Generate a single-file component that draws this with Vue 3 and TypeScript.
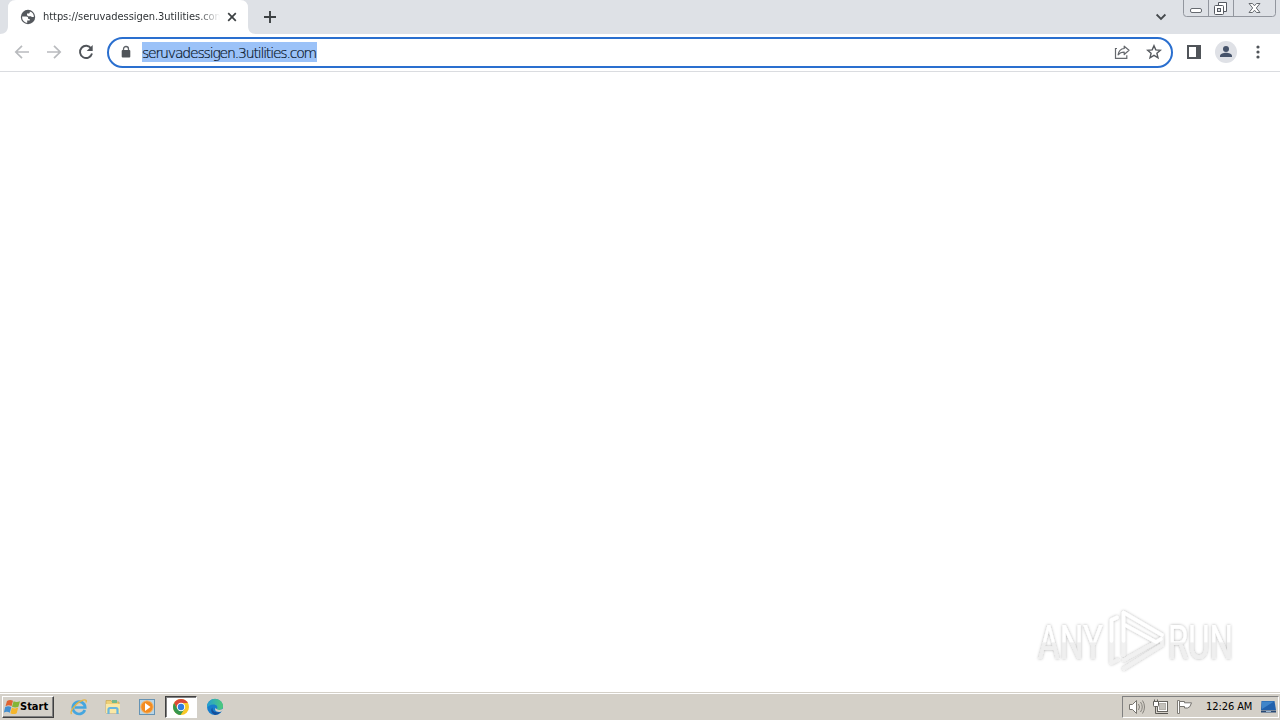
<script setup lang="ts">
import { ref } from 'vue'

const tabTitle = ref('https://seruvadessigen.3utilities.com')
const address = ref('seruvadessigen.3utilities.com')
const clock = ref('12:26 AM')
</script>

<template>
  <div class="desktop">
    <header class="strip">
      <svg class="tab-shape" width="264" height="34" viewBox="0 0 264 34"><path d="M0 34C5 34 8 31 8 26V8Q8 0 16 0H240Q248 0 248 8V26C248 31 251 34 256 34Z" fill="#fff" /></svg>
      <div class="tab">
        <svg width="16" height="16" viewBox="0 0 16 16"><circle cx="8" cy="8" r="7.2" fill="#54585d" /><path d="M2.100 7.400H6.500Q8.300 7.600 8.200 9.300V10h1.500v1.500H7.200v2.400A6 6 0 0 1 2.100 7.400Z" fill="#fff" /><path d="M9.800 2.400v.8c0 .8-.6 1.400-1.400 1.400H7V6L8 7.300h2.800c.5 0 .8.4.8.8h2.300A6 6 0 0 0 9.800 2.400Z" fill="#fff" /></svg>
        <span class="title">{{ tabTitle }}</span>
        <svg class="close" width="10" height="10" viewBox="0 0 10 10"><path d="m1.200 1.200 7.600 7.600m0-7.600L1.200 8.800" stroke="#3c4043" stroke-width="1.700" /></svg>
      </div>
      <svg class="plus" width="14" height="14" viewBox="0 0 14 14"><path d="M7 1v12M1 7h12" stroke="#3c4043" stroke-width="1.900" /></svg>
      <svg class="chevron" width="12" height="8" viewBox="0 0 12 8"><path d="m1.600 1.500 4.400 4.400 4.400-4.400" fill="none" stroke="#45494d" stroke-width="1.800" /></svg>
      <svg class="controls" width="94" height="18" viewBox="0 0 94 18">
        <path d="M.5 0v13.500q0 3 3 3h86q3 0 3-3V0M25.500 0v16M50.500 0v16" fill="none" stroke="#92969e" />
        <rect x="7.500" y="8.500" width="11" height="4" rx="1.500" fill="#fff" stroke="#666a70" />
        <path d="M35.500 5V2.500H43.500V11.500H41" fill="#fff" stroke="#555960" />
        <rect x="31.500" y="5.500" width="9" height="9" rx="1" fill="#fff" stroke="#555960" />
        <rect x="34.500" y="8.500" width="3" height="3" fill="#dee1e6" stroke="#555960" />
        <path d="M66 3.500h3.500l2 2.300 2-2.300H77l-3.700 4.500 3.700 4.500h-3.500l-2-2.300-2 2.300H66L69.700 8Z" fill="#fff" stroke="#676b70" />
      </svg>
    </header>

    <nav class="toolbar">
      <svg class="nav" width="16" height="16" viewBox="0 0 16 16"><path d="M15 8H2m6-6.200L1.800 8 8 14.200" fill="none" stroke="#b9bbbe" stroke-width="1.700" /></svg>
      <svg class="nav" width="16" height="16" viewBox="0 0 16 16"><path d="M1 8h13M8 1.800 14.200 8 8 14.200" fill="none" stroke="#b9bbbe" stroke-width="1.700" /></svg>
      <svg class="nav" width="16" height="16" viewBox="0 0 16 16"><path d="M13.200 4.500A6.100 6.100 0 1 0 14 9.500" fill="none" stroke="#505459" stroke-width="1.900" /><path d="M14.700 1v6H8.700Z" fill="#505459" /></svg>
      <div class="omnibox">
        <svg class="lock" width="10" height="14" viewBox="0 0 10 14"><path d="M2.500 6V4a2.500 2.500 0 0 1 5 0v2" fill="none" stroke="#5f6368" stroke-width="1.300" /><rect x=".7" y="5" width="8.600" height="7.500" rx="1" fill="#505459" /></svg>
        <span class="url"><span>{{ address }}</span></span>
        <svg class="share" width="16" height="16" viewBox="0 0 16 16"><path d="M3 4.500H1.500v9.800h11.300v-3" fill="none" stroke="#66696e" stroke-width="1.200" /><path d="M10.200 2.200 15 6.300l-4.800 4.200V8.100c-2.700 0-4.500.7-6.100 2.700.5-3.600 2.600-6 6.100-6.300Z" fill="none" stroke="#66696e" stroke-width="1.200" stroke-linejoin="round" /></svg>
        <svg class="star" width="16" height="16" viewBox="0 0 16 16"><path d="m8 1.700 1.800 4.200 4.600.4-3.500 3 1.100 4.500L8 11.400l-4 2.400 1.100-4.500-3.500-3 4.600-.4Z" fill="none" stroke="#55595e" stroke-width="1.400" /></svg>
      </div>
      <svg class="panel" width="14" height="14" viewBox="0 0 14 14"><rect x="1" y="1" width="12" height="12" fill="none" stroke="#505459" stroke-width="2" /><path d="M9 1h5v12H9Z" fill="#505459" /></svg>
      <svg class="avatar" width="22" height="22" viewBox="0 0 22 22"><circle cx="11" cy="11" r="11" fill="#dfe1e6" /><circle cx="11" cy="8" r="3" fill="#46536a" /><path d="M5 16v-1c0-2.200 3.500-3.300 6-3.300s6 1.100 6 3.300v1Z" fill="#46536a" /></svg>
      <svg class="menu" width="4" height="16" viewBox="0 0 4 16"><g fill="#505459"><circle cx="2" cy="3" r="1.600" /><circle cx="2" cy="8" r="1.600" /><circle cx="2" cy="13" r="1.600" /></g></svg>
    </nav>

    <main class="page">
      <svg class="watermark" width="210" height="76" viewBox="0 0 210 76">
        <defs>
          <linearGradient id="fade" x1="0" y1="0" x2="0" y2="1"><stop offset="0.49" stop-color="#fff" /><stop offset="0.52" stop-color="#efefef" /></linearGradient>
          <filter id="shade" x="-10%" y="-10%" width="120%" height="120%"><feDropShadow dx="0" dy="0" stdDeviation="1.700" flood-color="#000" flood-opacity=".32" /></filter>
        </defs>
        <g filter="url(#shade)">
          <g class="letters" fill="url(#fade)">
            <text x="8" y="58.500" textLength="65" lengthAdjust="spacingAndGlyphs">ANY</text>
            <text x="138" y="58.500" textLength="65" lengthAdjust="spacingAndGlyphs">RUN</text>
          </g>
          <g fill="none" stroke-width="3.600" stroke-linejoin="round" stroke-linecap="round">
            <path d="M81.500 42v21l6-3M93.500 42v13" stroke="#f1f1f1" />
            <path d="m94 60 32-18M94 68.500 132 45v-7" stroke="#f1f1f1" />
            <path d="M87 17.500 81.500 20v21" stroke="#fff" />
            <path d="M93.500 41V12.500L132 35M95 25l31 17 5-3" stroke="#fff" />
          </g>
        </g>
      </svg>
    </main>

    <footer class="taskbar">
      <button class="start">
        <svg width="17" height="16" viewBox="0 0 17 16"><path d="M3 2q3-2 6-.3L7.500 7.200Q5 5.500 1.500 7.200Z" fill="#df6331" /><path d="M9.600 2.200q3 1.500 6.400 0l-1.600 5.500q-3 1.500-6.400 0Z" fill="#83b536" /><path d="M1.200 8q3-1.500 6.100 0l-1.500 5.700q-3-1.800-6 0Z" fill="#438fd0" /><path d="M7.900 8.500q3 1.700 6.300.1l-1.500 5.600q-3 1.800-6.300 0Z" fill="#f5b62c" /></svg>
        <span>Start</span>
      </button>
      <div class="task ie">
        <svg width="18" height="18" viewBox="0 0 18 18"><path d="M14.800 12A6.200 6.200 0 1 1 15.200 9.500H4.600" fill="none" stroke="#45a6df" stroke-width="2.700" /><path d="M1.500 16C-.7 13 7 4 13 2.200c3-.9 3.900.2 2.900 2.300" fill="none" stroke="#e5b545" stroke-width="1.300" /></svg>
      </div>
      <div class="task">
        <svg width="18" height="18" viewBox="0 0 18 18"><path d="M2 2.500h5l1 1.500h7v11H2Z" fill="#eed077" stroke="#c9a650" stroke-width=".7" /><path d="M8 2h5v3H8Z" fill="#75b98b" /><path d="M2 6h14v9H2Z" fill="#fae8a5" /><path d="M4.500 16v-4.500q0-1.500 1.500-1.500h6q1.500 0 1.500 1.500V16" fill="none" stroke="#68b6df" stroke-width="2.200" /></svg>
      </div>
      <div class="task">
        <svg width="18" height="18" viewBox="0 0 18 18"><rect x="1.500" y="1.500" width="15" height="15" fill="#b9d5e6" stroke="#6593b4" /><circle cx="9" cy="9" r="6.200" fill="#f38c20" stroke="#f5b66b" /><path d="m7 5 5.500 4L7 13Z" fill="#fff" /></svg>
      </div>
      <div class="task active">
        <svg width="18" height="18" viewBox="0 0 18 18"><circle cx="9" cy="9" r="8" fill="#f9c827" /><path d="M2.100 5A8 8 0 0 1 15.900 5H9L5.500 11Z" fill="#dc4939" /><path d="M2.100 5A8 8 0 0 0 8.500 17L12.500 11H5.500Z" fill="#36964e" /><circle cx="9" cy="9" r="4.200" fill="#fff" /><circle cx="9" cy="9" r="3.200" fill="#327de0" /></svg>
      </div>
      <div class="task">
        <svg width="18" height="18" viewBox="0 0 18 18"><defs><linearGradient id="edge"><stop stop-color="#239ed4" /><stop offset="1" stop-color="#4ecb77" /></linearGradient></defs><circle cx="9" cy="9" r="8" fill="#177dcc" /><path d="M1 8.500A8 8 0 0 1 17 8.800c0 3-4.500 4.200-6.500 2.400 2.200-2.500-.2-4.800-3-4.800C4.700 6.300 2.200 7.500 1 10Z" fill="url(#edge)" /><path d="M6.500 9.500c-.8 4 3.700 6 8.500 4.300A8 8 0 0 1 9 17C5.500 15.500 4 12 6.500 9.500Z" fill="#164f9b" /><path d="M9.800 9.800c.5 2.500 4.500 2.800 7.400 1 .4 1.600-1.500 3.200-4.200 3.200-3.700 0-4.700-2.500-3.200-4.200Z" fill="#d4d0c8" /></svg>
      </div>
      <div class="tray">
        <svg class="speaker" width="18" height="16" viewBox="0 0 18 16"><path d="M1.500 5.500h3l4-4v13l-4-4h-3Z" fill="#fff" stroke="#77756f" /><path d="M10.500 5q2 3 0 6M12.500 3q3.500 5 0 10M14.500 1.500q4 6.500 0 13" fill="none" stroke="#85827c" /></svg>
        <svg class="network" width="18" height="16" viewBox="0 0 18 16"><rect x="5.500" y="2.500" width="10" height="10" fill="#fff" stroke="#65635e" /><rect x="7.500" y="4.500" width="6" height="6" fill="#c4c2bc" stroke="#b3b0aa" /><path d="M6 14.500h10" stroke="#55534f" /><path d="M1.500 2.500h5v4q0 1-1 1h-3q-1 0-1-1ZM2.500.5v2m3-2v2" fill="#fff" stroke="#605e59" /><path d="M3.500 8v6.500H6" fill="none" stroke="#605e59" /></svg>
        <svg class="flag" width="17" height="16" viewBox="0 0 17 16"><path d="M1.500 1.500h2v13h-2Z" fill="#fff" stroke="#807d77" /><path d="M3.500 2.500h5v1.300H15.500q-1.200 5-4 5.200H8.500V7.500h-5Z" fill="#fff" stroke="#75736e" /></svg>
        <span class="clock">{{ clock }}</span>
        <svg class="screen" width="17" height="14" viewBox="0 0 17 14"><path d="M1.500 1h13l1.500 9H1Z" fill="#2161ad" /><path d="M2 1.500h12L2 9Z" fill="#3f85ca" /><path d="M1 11.500h15" stroke="#284974" stroke-width="2" /><path d="M6 11.500h5" stroke="#95b6d6" /></svg>
      </div>
    </footer>
  </div>
</template>

<style>
body {
  margin: 0;
  overflow: hidden;
}
</style>

<style scoped>
* {
  box-sizing: border-box;
}

svg {
  display: block;
  flex: none;
}

.desktop {
  width: 1280px;
  height: 720px;
  display: flex;
  flex-direction: column;
  background: #fff;
  font-family: "DejaVu Sans Condensed", "DejaVu Sans", sans-serif;
}

.strip {
  height: 34px;
  background: #dee1e6;
  display: flex;
  position: relative;
}

.tab-shape {
  position: absolute;
  left: 0;
  top: 0;
}

.tab {
  position: relative;
  width: 248px;
  height: 34px;
  padding: 0 11px 0 20px;
  display: flex;
  align-items: center;
}

.title {
  width: 177px;
  margin-left: 7px;
  overflow: hidden;
  white-space: nowrap;
  font-family: "DejaVu Sans", sans-serif;
  font-stretch: condensed;
  font-size: 11px;
  line-height: 18px;
  letter-spacing: -0.05px;
  color: #2f3336;
  mask-image: linear-gradient(90deg, #000 155px, transparent 177px);
}

.close {
  margin-left: 7px;
}

.plus {
  margin: 10px 0 0 15px;
}

.chevron {
  margin: 13px 16px 0 auto;
}

.controls {
  margin-right: 3px;
}

.toolbar {
  height: 38px;
  border-bottom: 1px solid #dadce0;
  display: flex;
  align-items: center;
  padding: 0 20px 1px 14px;
}

.nav {
  margin-right: 16px;
}

.nav + .nav + .nav {
  margin-right: 13px;
}

.omnibox {
  width: 1066px;
  height: 31px;
  margin-top: 1px;
  border: 2px solid #2a6fcf;
  border-radius: 16px;
  display: flex;
  align-items: center;
  padding: 0 9px 1px 12px;
}

.url {
  flex: 1;
  margin-left: 11px;
  height: 20px;
}

.url span {
  display: block;
  width: 175px;
  height: 20px;
  background: #9bc2f8;
  font-family: "DejaVu Sans", sans-serif;
  font-weight: 200;
  font-stretch: condensed;
  font-size: 14px;
  line-height: 22px;
  letter-spacing: -1.18px;
  color: #071426;
  -webkit-text-stroke: 0.2px #071426;
  white-space: nowrap;
}

.share {
  margin-right: 16px;
}

.panel {
  margin-left: 14px;
}

.avatar {
  margin-left: 14px;
}

.menu {
  margin-left: auto;
}

.page {
  height: 620px;
  display: flex;
  align-items: flex-end;
  justify-content: flex-end;
  padding: 0 40px 16px 0;
}

.letters {
  font-family: Roboto, "Liberation Sans", sans-serif;
  font-size: 49px;
  font-weight: 400;
}

.taskbar {
  height: 28px;
  background: #d4d0c8;
  border-top: 1px solid #d4d0c8;
  box-shadow: inset 0 1px #fff;
  display: flex;
  align-items: center;
  padding: 2px 1px 2px 2px;
}

.start {
  width: 52px;
  height: 22px;
  margin: 0 9px 0 0;
  padding: 0 1px;
  display: flex;
  align-items: center;
  border: 1px solid;
  border-color: #fff #404040 #404040 #fff;
  box-shadow: inset -1px -1px #808080;
  background: #d4d0c8;
  font: bold 11px "DejaVu Sans Condensed", "DejaVu Sans", sans-serif;
  letter-spacing: 0;
  color: #000;
}

.start span {
  margin-left: -1px;
}

.task {
  width: 32px;
  height: 22px;
  margin-right: 2px;
  display: flex;
  align-items: center;
  justify-content: center;
}

.active {
  border: 1px solid;
  border-color: #404040 #fff #fff #404040;
  box-shadow: inset 1px 1px #808080;
  background: #fff;
}

.tray {
  width: 157px;
  height: 22px;
  margin-left: auto;
  display: flex;
  align-items: center;
  border: 1px solid;
  border-color: #808080 #fff #fff #808080;
  padding: 0 1px 0 5px;
}

.network {
  margin-left: 6px;
}

.flag {
  margin-left: 6px;
}

.clock {
  width: 49px;
  margin-left: 13px;
  font-size: 11px;
  line-height: 16px;
  letter-spacing: -0.08px;
  white-space: nowrap;
  color: #000;
}

.screen {
  margin-left: auto;
}
</style>
